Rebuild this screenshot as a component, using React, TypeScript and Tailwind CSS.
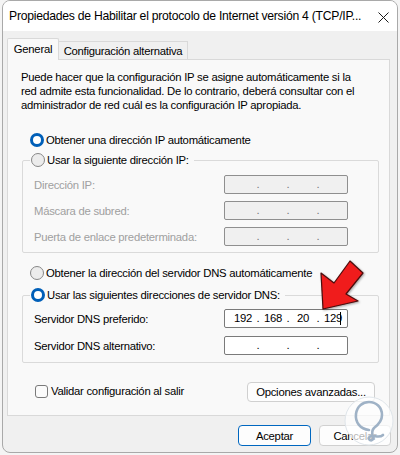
import React from "react";

const T = "text-[11.3px]";

function Radio({ checked }: { checked?: boolean }) {
  return checked ? (
    <span className="box-border inline-block h-[14px] w-[14px] shrink-0 rounded-full border-[3.5px] border-[#005fb8] bg-white" />
  ) : (
    <span className="box-border inline-block h-[14px] w-[14px] shrink-0 rounded-full border border-[#878787] bg-[#ececec]" />
  );
}

function IpField({ value, disabled }: { value?: string[]; disabled?: boolean }) {
  const cls = disabled
    ? "border-[#8f8f8f] bg-[#f0f0f0]"
    : "border-[#7a7a7a] bg-white";
  const parts = value ?? ["", "", "", ""];
  return (
    <div
      className={`box-border flex h-[19px] w-[124px] items-center rounded-[2px] border ${T} text-black ${cls}`}
    >
      <div className="flex w-full items-center pl-[6px]">
        {parts.map((p, i) => (
          <React.Fragment key={i}>
            <span className="w-[24px] text-center leading-[17px]">{p}</span>
            {i < 3 && (
              <span
                className={`w-[6px] text-center leading-[17px] ${disabled ? "text-[#777]" : "text-black"}`}
              >
                .
              </span>
            )}
          </React.Fragment>
        ))}
      </div>
    </div>
  );
}

function FieldRow({
  label,
  disabled,
  value,
  cursor,
}: {
  label: string;
  disabled?: boolean;
  value?: string[];
  cursor?: boolean;
}) {
  return (
    <div className="flex h-[19px] items-center">
      <span
        className={`box-border w-[201px] shrink-0 whitespace-nowrap pl-[11px] ${T} leading-[16px] ${disabled ? "text-[#a0a0a0]" : "text-black"}`}
      >
        {label}
      </span>
      <div className="relative">
        <IpField value={value} disabled={disabled} />
        {cursor && (
          <span className="absolute left-[116px] top-[3px] h-[13px] w-px bg-black" />
        )}
      </div>
    </div>
  );
}

function GroupBox({
  checked,
  label,
  children,
  pb,
}: {
  checked?: boolean;
  label: string;
  children: React.ReactNode;
  pb: string;
}) {
  return (
    <div className={`ml-[14px] box-border w-[357px] rounded-[2px] border border-[#dadada] ${pb}`}>
      <div className="-mt-[9px] ml-[7px] flex h-[16px] w-fit items-center gap-[2px] bg-[#f9f9f9] pl-px pr-[5px]">
        <Radio checked={checked} />
        <span className={`whitespace-nowrap ${T} leading-[16px] text-black`}>{label}</span>
      </div>
      {children}
    </div>
  );
}

export default function App() {
  return (
    <div className="relative h-[455px] w-[400px] overflow-hidden bg-[#f4f4f4] font-['Liberation_Sans',Arial,sans-serif] tracking-[-0.25px]">
      <div className="ml-[2px] box-border flex h-[453px] w-[396px] flex-col overflow-hidden rounded-[8px] border border-[#a9a9a9] bg-[#f0f0f0]">
        {/* title bar */}
        <div className="flex h-[30px] shrink-0 items-center justify-between bg-white pl-[6px] pr-[8px]">
          <span className="whitespace-nowrap text-[12.2px] leading-[18px] text-black">
            Propiedades de Habilitar el protocolo de Internet versión 4 (TCP/IP...
          </span>
          <svg width="11" height="11" viewBox="0 0 11 11" className="mt-[2px] shrink-0">
            <path d="M0.5 0.5 L10.5 10.5 M10.5 0.5 L0.5 10.5" stroke="#1a1a1a" strokeWidth="1" />
          </svg>
        </div>

        {/* tabs */}
        <div className="mt-[7px] flex items-end pl-[4px]">
          <div className="relative z-10 -mb-px box-border flex h-[22px] w-[52px] items-start justify-center rounded-t-[2px] border border-b-0 border-[#d9d9d9] bg-[#f9f9f9] pt-[2px]">
            <span className={`whitespace-nowrap ${T} leading-[16px] text-black`}>General</span>
          </div>
          <div className="box-border flex h-[18px] w-[129px] items-center justify-center border-r border-t border-[#d9d9d9] bg-[#f0f0f0]">
            <span className={`whitespace-nowrap ${T} leading-[16px] text-black`}>Configuración alternativa</span>
          </div>
        </div>

        {/* panel */}
        <div className="ml-[4px] box-border h-[357px] w-[383px] border border-[#d9d9d9] bg-[#f9f9f9]">
          <p className={`ml-[13px] whitespace-nowrap pt-[10px] ${T} leading-[14px] text-black`}>
            Puede hacer que la configuración IP se asigne automáticamente si la
            <br />
            red admite esta funcionalidad. De lo contrario, deberá consultar con el
            <br />
            administrador de red cuál es la configuración IP apropiada.
          </p>

          <div className="ml-[22px] mt-[20px] flex h-[16px] items-center gap-[2px]">
            <Radio checked />
            <span className={`whitespace-nowrap ${T} leading-[16px] text-black`}>
              Obtener una dirección IP automáticamente
            </span>
          </div>

          <div className="mt-[12px]">
            <GroupBox label="Usar la siguiente dirección IP:" pb="pb-[6px]">
              <div className="mt-[7px] flex flex-col gap-[7px]">
                <FieldRow label="Dirección IP:" disabled />
                <FieldRow label="Máscara de subred:" disabled />
                <FieldRow label="Puerta de enlace predeterminada:" disabled />
              </div>
            </GroupBox>
          </div>

          <div className="ml-[22px] mt-[12px] flex h-[16px] items-center gap-[2px]">
            <Radio />
            <span className={`whitespace-nowrap ${T} leading-[16px] text-black`}>
              Obtener la dirección del servidor DNS automáticamente
            </span>
          </div>

          <div className="mt-[14px]">
            <GroupBox checked label="Usar las siguientes direcciones de servidor DNS:" pb="pb-[7px]">
              <div className="mt-[6px] flex flex-col gap-[8px]">
                <FieldRow label="Servidor DNS preferido:" value={["192", "168", "20", "129"]} cursor />
                <FieldRow label="Servidor DNS alternativo:" />
              </div>
            </GroupBox>
          </div>

          <div className="ml-[14px] mt-[19px] box-border flex w-[357px] items-start justify-between pl-[13px] pr-[4px]">
            <div className="flex items-center gap-[3px] pt-px">
              <span className="box-border inline-block h-[13px] w-[13px] rounded-[3px] border border-[#7a7a7a] bg-[#fbfbfb]" />
              <span className={`whitespace-nowrap ${T} leading-[16px] text-black`}>Validar configuración al salir</span>
            </div>
            <button className={`box-border flex h-[20px] w-[128px] items-center justify-center whitespace-nowrap rounded-[4px] border border-[#d0d0d0] bg-[#fdfdfd] ${T} leading-[16px] text-black`}>
              Opciones avanzadas...
            </button>
          </div>
        </div>

        {/* bottom buttons */}
        <div className="mt-[9px] flex justify-end gap-[8px] pr-[6px]">
          <button className={`box-border flex h-[21px] w-[73px] items-center justify-center rounded-[4px] border border-[#0067c0] bg-[#fdfdfd] ${T} leading-[16px] text-black`}>
            Aceptar
          </button>
          <button className={`box-border flex h-[21px] w-[72px] items-center justify-center rounded-[4px] border border-[#d0d0d0] bg-[#fdfdfd] ${T} leading-[16px] text-black`}>
            Cancelar
          </button>
        </div>
      </div>

      {/* red arrow overlay */}
      <svg className="pointer-events-none absolute left-0 top-0" width="400" height="455">
        <defs>
          <filter id="sh" x="-20%" y="-20%" width="140%" height="140%">
            <feDropShadow dx="1" dy="1" stdDeviation="1" floodColor="#000" floodOpacity="0.35" />
          </filter>
        </defs>
        <polygon
          points="323,309 321,273 334,283 350,261 363,273 346,294 358,301"
          fill="#f01c1c"
          stroke="#4a0a0a"
          strokeWidth="1.2"
          strokeLinejoin="round"
          filter="url(#sh)"
        />
      </svg>

      {/* watermark */}
      <svg className="pointer-events-none absolute left-[342px] top-[394px]" width="54" height="56" viewBox="0 0 54 56">
        <circle cx="27" cy="27" r="24" fill="#ffffff" fillOpacity="0.7" stroke="#dfe5ea" strokeWidth="1" />
        <path
          d="M27 36 C18 35 13 28 14 20 C15 12 21 8 27 8 C34 8 40 13 40 21 C40 27 36 31 32 34 C30 36 30 40 31 43 C32 45 30 47 28 46 C26 45 27 42 30 42 C34 42 38 44 41 41"
          fill="none"
          stroke="#9fb2c6"
          strokeWidth="2.6"
          strokeLinecap="round"
          strokeLinejoin="round"
        />
      </svg>
    </div>
  );
}
